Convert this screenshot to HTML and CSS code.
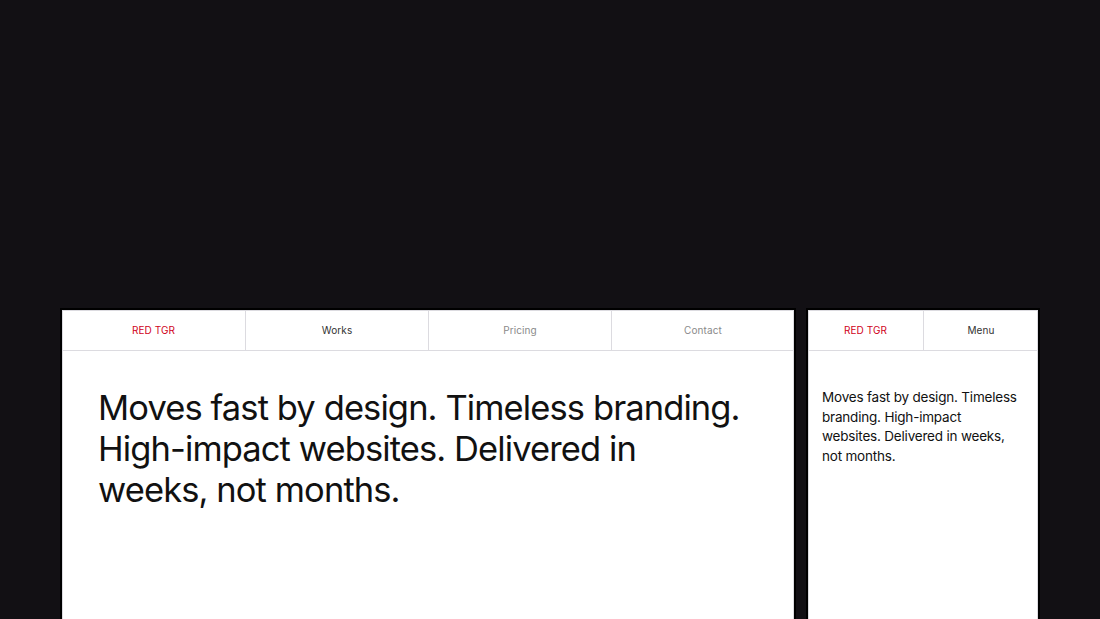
FILE: index.html
```html
<!DOCTYPE html>
<html lang="en">
<head>
<meta charset="utf-8">
<title>RED TGR</title>
<link rel="stylesheet" href="styles.css">
</head>
<body>
<main class="stage">
  <section class="frame frame-desktop">
    <nav class="nav nav-4">
      <div class="nav-cell brand">RED TGR</div>
      <div class="nav-cell active">Works</div>
      <div class="nav-cell muted">Pricing</div>
      <div class="nav-cell muted">Contact</div>
    </nav>
    <div class="content content-desktop">
      <p class="headline">Moves fast by design. Timeless branding. High-impact websites. Delivered in weeks, not months.</p>
    </div>
  </section>
  <section class="frame frame-mobile">
    <nav class="nav nav-2">
      <div class="nav-cell brand">RED TGR</div>
      <div class="nav-cell active">Menu</div>
    </nav>
    <div class="content content-mobile">
      <p class="lede">Moves fast by design. Timeless branding. High-impact websites. Delivered in weeks, not months.</p>
    </div>
  </section>
</main>
</body>
</html>
```

FILE: styles.css
```css
html, body {
  margin: 0;
  padding: 0;
  background: #121014;
  height: 100%;
  overflow: hidden;
}
body {
  font-family: Inter, "Noto Sans", sans-serif;
  color: #111;
}
.stage {
  display: flex;
  gap: 10px;
  padding: 308px 0 0 60px;
  height: 619px;
  box-sizing: border-box;
}
.frame {
  background: #fff;
  border: 2px solid #000;
  border-bottom: none;
  box-sizing: border-box;
  height: 320px;
  box-shadow: inset 1px 1px 0 #dcdbe0, inset -1px 0 0 #dcdbe0;
}
.frame-desktop { width: 736px; }
.frame-mobile { width: 234px; }
.nav {
  display: grid;
  height: 40px;
  border-bottom: 1px solid #dcdbe0;
}
.nav-4 { grid-template-columns: repeat(4, 1fr); }
.nav-2 { grid-template-columns: repeat(2, 1fr); }
.nav-cell {
  display: flex;
  align-items: center;
  justify-content: center;
  font-size: 10px;
  letter-spacing: 0.1px;
  color: #333;
  border-left: 1px solid #dcdbe0;
}
.nav-cell:first-child { border-left: none; }
.nav-cell.brand { color: #d0021b; }
.nav-cell.muted { color: #8a8a8a; }
.content-desktop { padding: 36px 36px 0 36px; }
.content-mobile { padding: 37px 14px 0 14px; }
.headline {
  margin: 0;
  max-width: 650px;
  font-size: 34.5px;
  line-height: 41px;
  letter-spacing: -0.9px;
  font-weight: 400;
}
.lede {
  margin: 0;
  max-width: 198px;
  font-size: 13.5px;
  line-height: 19.5px;
  letter-spacing: -0.2px;
}
```
